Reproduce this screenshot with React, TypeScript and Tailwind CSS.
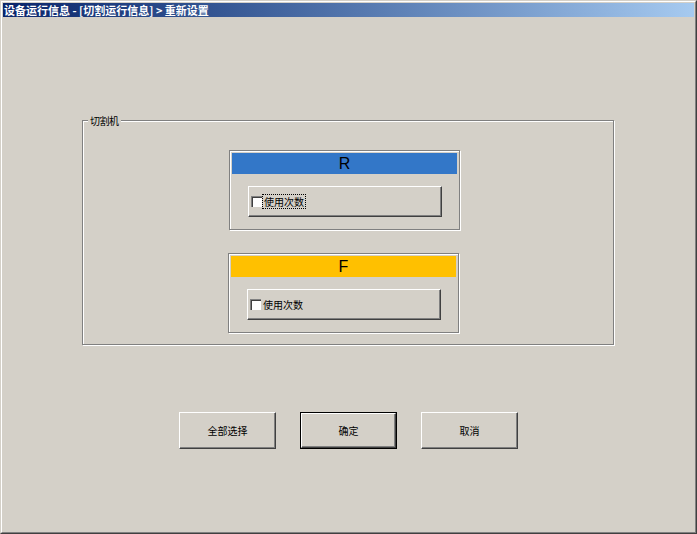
import React from "react";

const font = { fontFamily: '"Noto Sans CJK SC", "DejaVu Sans", sans-serif' };

function Check({ focus }: { focus?: boolean }) {
  return (
    <div className="flex items-center h-full pl-[1px]">
      <div className="w-[11px] h-[11px] bg-white border-t border-l border-[#808080] border-r-white border-b-white shadow-[inset_1px_1px_0_#404040]" />
      <span
        className={
          "ml-[1px] text-[10px] leading-[13px] text-black px-[1px] " +
          (focus ? "outline outline-1 outline-dotted outline-black" : "")
        }
      >
        使用次数
      </span>
    </div>
  );
}

function Panel({
  label,
  color,
  focus,
  ml,
  header,
}: {
  label: string;
  color: string;
  focus?: boolean;
  ml: string;
  header: string;
}) {
  return (
    <div
      className={
        "w-[231px] h-[80px] border border-[#808080] shadow-[inset_1px_1px_0_#fff,1px_1px_0_#fff] p-[2px] flex flex-col " +
        ml
      }
    >
      <div
        className={
          "flex items-center justify-center text-black text-[16px] " + color + " " + header
        }
        style={{ fontFamily: '"Liberation Sans", Arial, sans-serif' }}
      >
        {label}
      </div>
      <div className="ml-[16px] mt-[12px] w-[194px] h-[31px] border-t border-l border-white border-r-[#404040] border-b-[#404040] border-r border-b shadow-[inset_-1px_-1px_0_#808080] pl-[1px]">
        <Check focus={focus} />
      </div>
    </div>
  );
}

function Btn({ text, def }: { text: string; def?: boolean }) {
  return (
    <div
      className={
        "w-[97px] h-[37px] " + (def ? "border border-black" : "")
      }
    >
      <div className="w-full h-full border-t border-l border-white border-r border-b border-r-[#404040] border-b-[#404040] shadow-[inset_-1px_-1px_0_#808080] flex items-center justify-center text-[10px] text-black">
        {text}
      </div>
    </div>
  );
}

export default function App() {
  return (
    <div
      className="w-[697px] h-[534px] bg-[#d4d0c8] border-l border-t border-[#d4d0c8] border-r border-b border-r-[#404040] border-b-[#404040] flex"
      style={font}
    >
      <div className="flex-1 flex flex-col border-l border-t border-white border-r border-b border-r-[#808080] border-b-[#808080] p-[1px]">
        <div className="h-[14px] bg-gradient-to-r from-[#0a246a] to-[#a6caf0] flex items-center pl-[1px] text-white text-[11px] font-bold leading-none whitespace-nowrap">
          设备运行信息 - [切割运行信息] &gt; 重新设置
        </div>
        <div className="relative ml-[79px] mt-[103px] w-[532px] h-[225px] border border-[#808080] shadow-[inset_1px_1px_0_#fff,1px_1px_0_#fff] flex flex-col pt-[29px]">
          <div className="absolute left-[5px] top-[-7px] px-[2px] bg-[#d4d0c8] text-[10px] leading-[13px] text-black tracking-[-0.5px]">
            切割机
          </div>
          <Panel label="R" color="bg-[#3377c8]" focus ml="ml-[146px]" header="h-[21px]" />
          <div className="h-[23px]" />
          <Panel label="F" color="bg-[#ffc000]" ml="ml-[145px]" header="h-[21px]" />
        </div>
        <div className="flex gap-[24px] ml-[176px] mt-[67px]">
          <Btn text="全部选择" />
          <Btn text="确定" def />
          <Btn text="取消" />
        </div>
      </div>
    </div>
  );
}
